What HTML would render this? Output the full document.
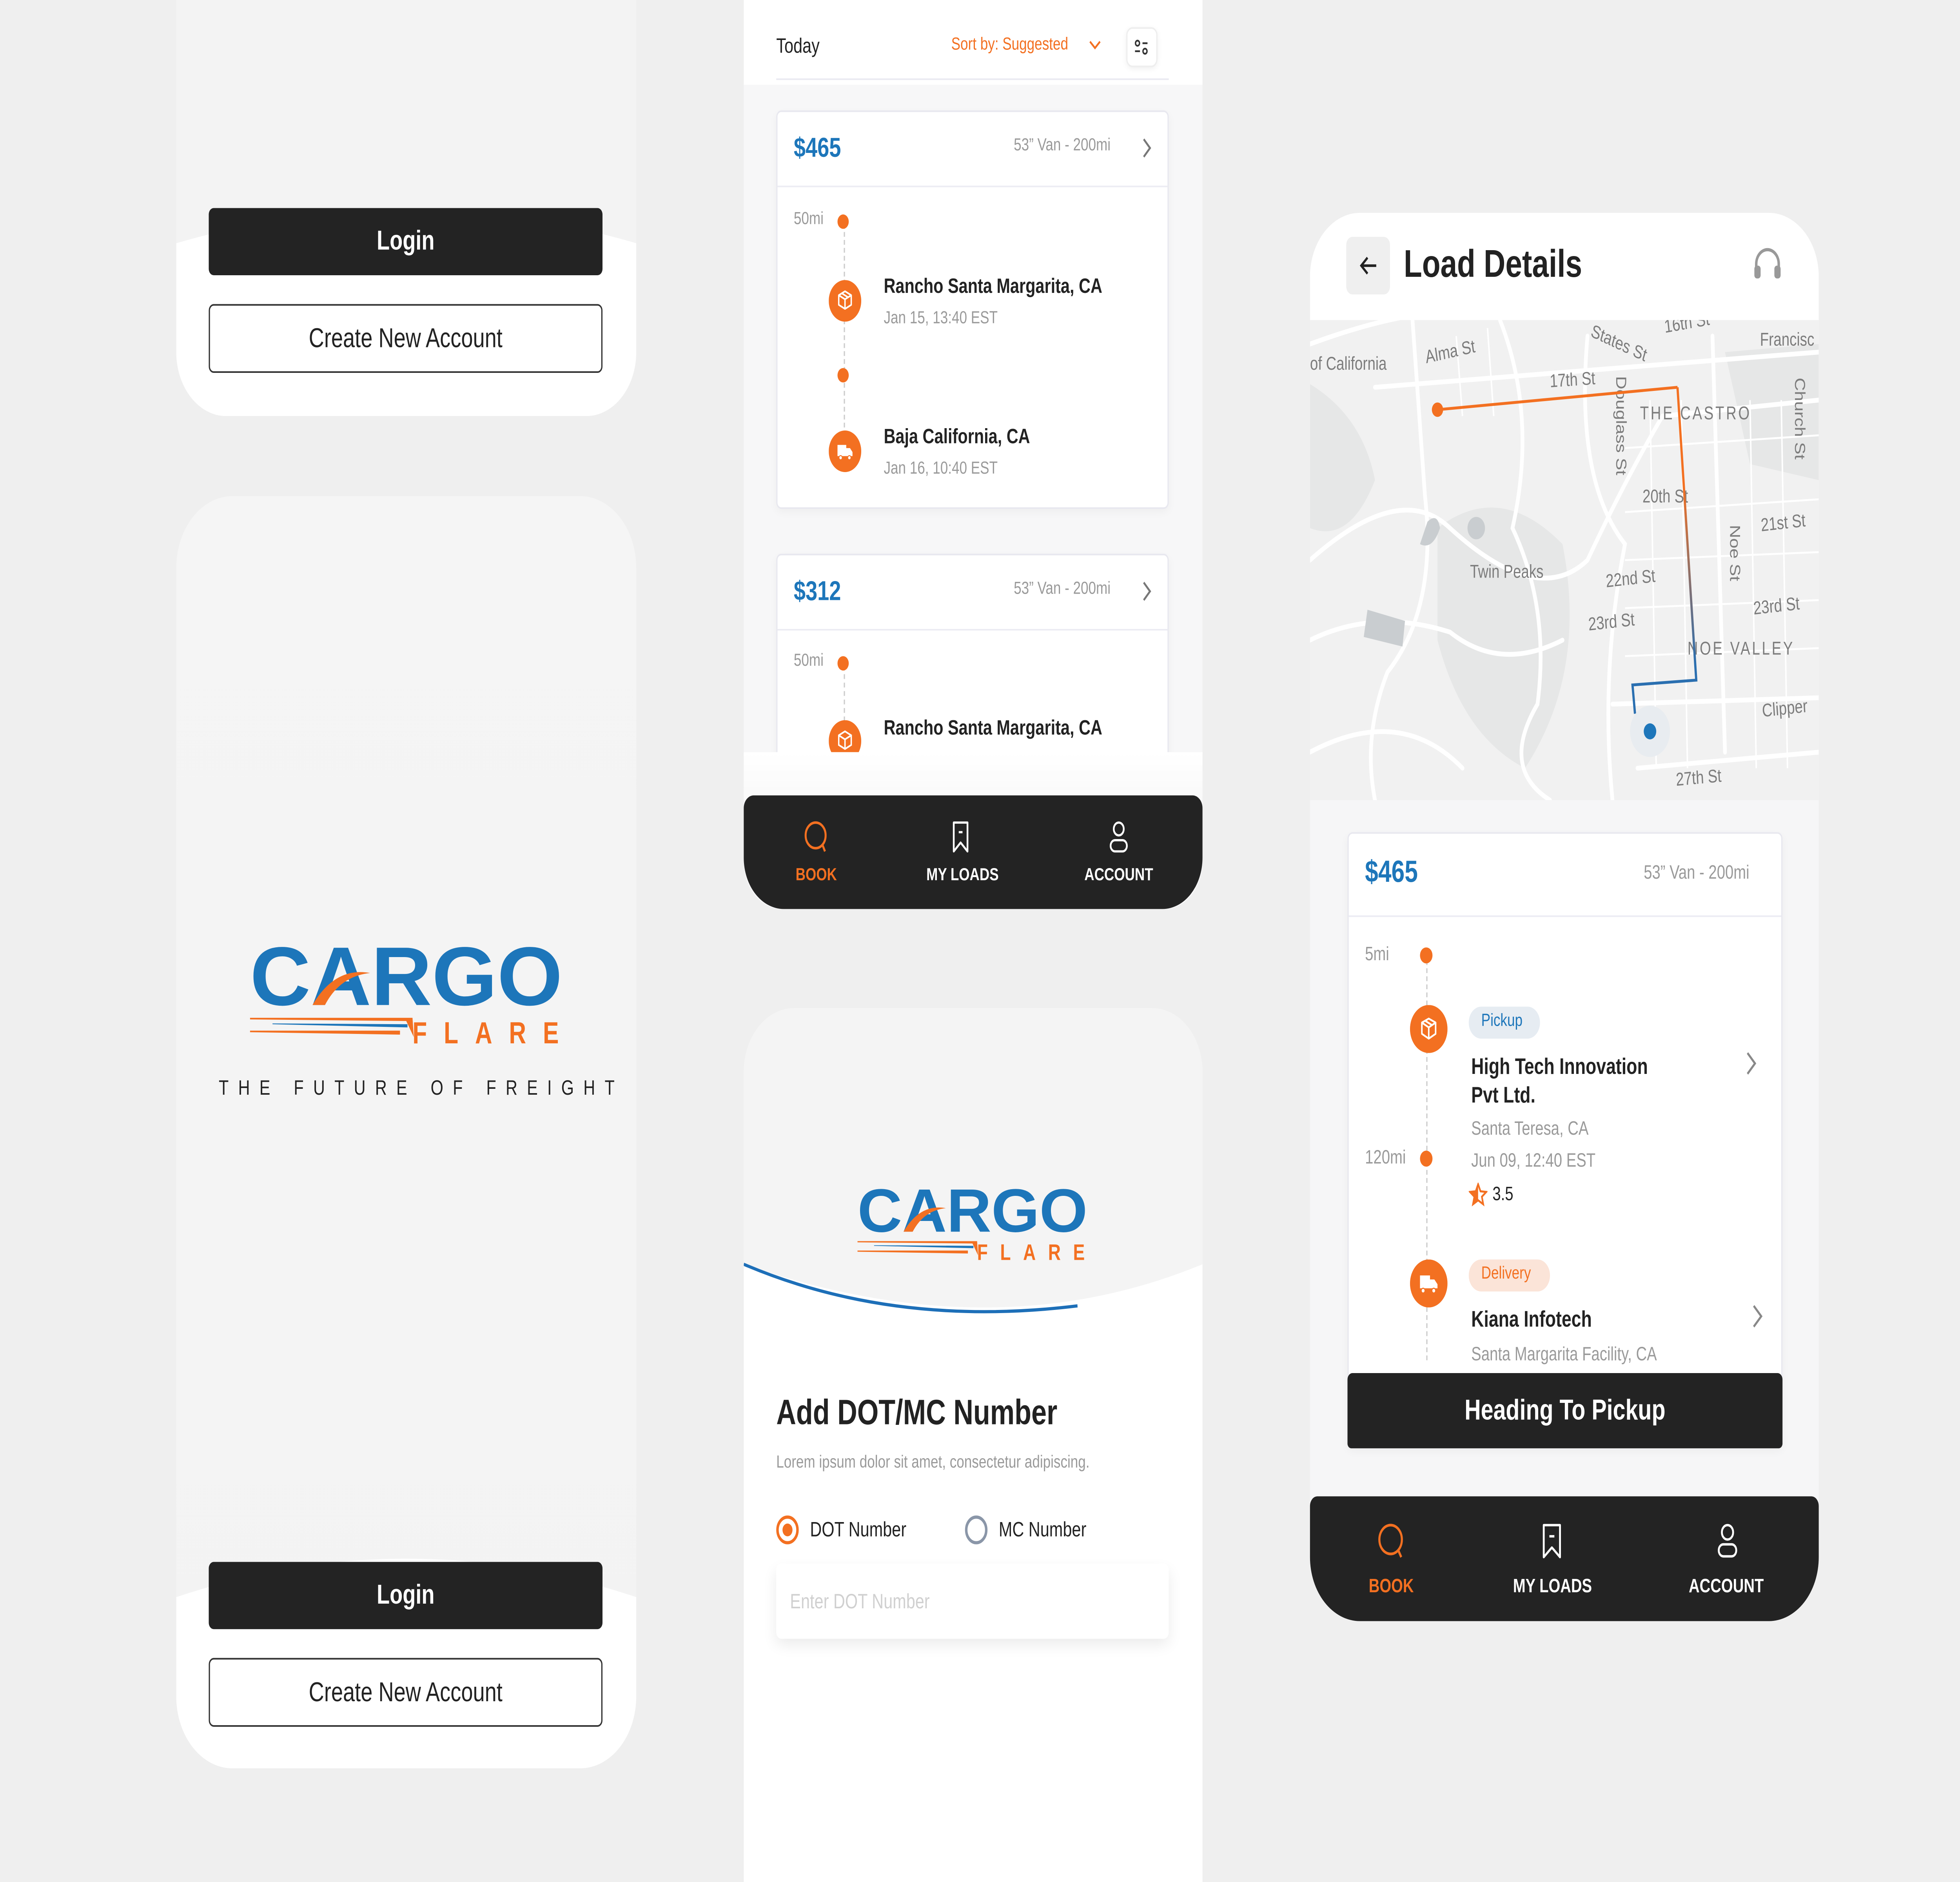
<!DOCTYPE html>
<html><head><meta charset="utf-8">
<style>
html,body{margin:0;padding:0;width:100vw;height:100vh;overflow:hidden;}
body{background:#efefef;font-family:"Liberation Sans",sans-serif;position:relative;}
#s{position:absolute;left:0;top:0;width:1568px;height:1176px;transform:scale(4.0816);transform-origin:0 0;background:#efefef;overflow:hidden;}
.a{position:absolute;}
.t{position:absolute;white-space:nowrap;line-height:1;}
.btnd{position:absolute;background:#232323;color:#fff;font-weight:bold;display:flex;align-items:center;justify-content:center;border-radius:4px;}
.btno{position:absolute;background:#fff;color:#222;border:1px solid #333;box-sizing:border-box;display:flex;align-items:center;justify-content:center;border-radius:4px;}
.card{position:absolute;background:#fff;border:1px solid #e8e8ef;box-sizing:border-box;border-radius:4px;box-shadow:0 2px 6px rgba(0,0,0,0.04);}
.g{color:#9a9a9a;}
.b{font-weight:bold;color:#222;}
.nav{position:absolute;background:#232323;}
.nl{position:absolute;font-size:11px;font-weight:bold;color:#fff;transform:translateX(-50%);white-space:nowrap;}
</style></head><body><div id="s">

<!-- Panel A -->
<div class="a" style="left:141px;top:-40px;width:368px;height:300px;border-radius:40px;overflow:hidden;background:#f3f3f3;">
 <svg class="a" style="left:0;top:0" width="368" height="300"><path d="M0,192 Q184,150 368,192 L368,300 L0,300Z" fill="#fff"/></svg>
</div>
<div class="btnd" style="left:167px;top:130px;width:315px;height:42px;font-size:17px;">Login</div>
<div class="btno" style="left:167px;top:190px;width:315px;height:43px;font-size:17px;">Create New Account</div>

<!-- Panel B -->
<div class="a" style="left:141px;top:310px;width:368px;height:795px;border-radius:45px;overflow:hidden;background:linear-gradient(180deg,#f5f5f5,#f3f3f3);">
 <svg class="a" style="left:0;top:0" width="368" height="795"><path d="M0,688 Q184,640 368,688 L368,795 L0,795Z" fill="#fff"/></svg>
</div>
<svg class="a" style="left:200px;top:588px" width="250" height="66" viewBox="0 0 250 66">
 <text x="0" y="40" font-family="Liberation Sans" font-weight="bold" font-size="52" fill="#1d76ba" textLength="250" lengthAdjust="spacingAndGlyphs">CARGO</text>
 <path d="M50,40 Q68,16 96,20 Q72,22 60,40Z" fill="#f37021"/>
 <text x="130" y="64" font-family="Liberation Sans" font-weight="bold" font-size="19" fill="#f37021" textLength="117" lengthAdjust="spacing">FLARE</text>
 <path d="M0,48 L130,48 L131,60 L125,50 L0,49Z" fill="#f37021"/>
 <path d="M18,51.5 L126,52 L126,54 L18,52Z" fill="#1d76ba"/>
 <path d="M0,56 L120,56 L120,58.5 L0,57Z" fill="#f37021"/>
</svg>
<div class="t" style="left:175px;top:673px;font-size:13px;letter-spacing:7.6px;color:#222;">THE FUTURE OF FREIGHT</div>
<div class="btnd" style="left:167px;top:976px;width:315px;height:42px;font-size:17px;">Login</div>
<div class="btno" style="left:167px;top:1036px;width:315px;height:43px;font-size:17px;">Create New Account</div>

<!-- Panel C -->
<div class="a" style="left:595px;top:-30px;width:367px;height:598px;border-radius:30px;overflow:hidden;background:#f7f7f8;">
 <div class="a" style="left:0;top:0;width:367px;height:83px;background:#fff;"></div>
</div>
<div class="t" style="left:621px;top:22px;font-size:13px;color:#222;">Today</div>
<div class="t" style="left:761px;top:23px;font-size:11px;color:#f37021;">Sort by: Suggested</div>
<svg class="a" style="left:870px;top:24px" width="12" height="10"><path d="M2,2 L6,6 L10,2" stroke="#f37021" stroke-width="1.3" fill="none"/></svg>
<div class="a" style="left:901px;top:17px;width:25px;height:25px;background:#fff;border:1px solid #eee;border-radius:5px;box-sizing:border-box;box-shadow:0 1px 4px rgba(0,0,0,.06);"></div>
<svg class="a" style="left:905px;top:21px" width="17" height="17"><circle cx="5" cy="6" r="1.6" stroke="#333" fill="none" stroke-width="1.1"/><path d="M9,6 H13 M3,11 H7" stroke="#333" stroke-width="1.1"/><circle cx="11" cy="11" r="1.6" stroke="#333" fill="none" stroke-width="1.1"/></svg>
<div class="a" style="left:621px;top:49px;width:314px;height:1px;background:#eaeaf2;"></div>

<div class="a" style="left:595px;top:50px;width:367px;height:420px;overflow:hidden;">
 <div class="card" style="left:26px;top:19px;width:314px;height:249px;"></div>
 <div class="card" style="left:26px;top:296px;width:314px;height:200px;"></div>
</div>
<!-- card1 -->
<div class="t" style="left:635px;top:84px;font-size:17px;font-weight:bold;color:#1d76ba;">$465</div>
<div class="t g" style="left:811px;top:86px;font-size:11px;">53” Van - 200mi</div>
<svg class="a" style="left:912px;top:85px" width="10" height="15"><path d="M3,2 L8,7.5 L3,13" stroke="#777" stroke-width="1.4" fill="none"/></svg>
<div class="a" style="left:622px;top:116px;width:312px;height:1px;background:#ececf3;"></div>
<div class="t g" style="left:635px;top:132px;font-size:11px;">50mi</div>
<div class="a" style="left:675px;top:140px;height:142px;border-left:1px dashed #ccc;"></div>
<div class="a" style="left:670px;top:134px;width:9px;height:9px;border-radius:50%;background:#f37021;"></div>
<div class="a" style="left:670px;top:230px;width:9px;height:9px;border-radius:50%;background:#f37021;"></div>
<svg class="a" style="left:663px;top:175px" width="26" height="26"><circle cx="13" cy="13" r="13" fill="#f37021"/><path d="M13,7 L18,9.5 V15.5 L13,18 L8,15.5 V9.5Z M8,9.5 L13,12 L18,9.5 M13,12 V18 M10.5,8.3 L15.5,10.8" stroke="#fff" stroke-width="1.1" fill="none" stroke-linejoin="round"/></svg>
<div class="t b" style="left:707px;top:172px;font-size:13px;">Rancho Santa Margarita, CA</div>
<div class="t g" style="left:707px;top:194px;font-size:11px;">Jan 15, 13:40 EST</div>
<svg class="a" style="left:663px;top:269px" width="26" height="26"><circle cx="13" cy="13" r="13" fill="#f37021"/><path d="M7,9 H14 V16 H7Z M14,11 H17 L19,13.5 V16 H14Z" fill="#fff"/><circle cx="9.5" cy="17" r="1.3" fill="#fff" stroke="#f37021" stroke-width=".6"/><circle cx="16.5" cy="17" r="1.3" fill="#fff" stroke="#f37021" stroke-width=".6"/></svg>
<div class="t b" style="left:707px;top:266px;font-size:13px;">Baja California, CA</div>
<div class="t g" style="left:707px;top:288px;font-size:11px;">Jan 16, 10:40 EST</div>
<!-- card2 -->
<div class="t" style="left:635px;top:361px;font-size:17px;font-weight:bold;color:#1d76ba;">$312</div>
<div class="t g" style="left:811px;top:363px;font-size:11px;">53” Van - 200mi</div>
<svg class="a" style="left:912px;top:362px" width="10" height="15"><path d="M3,2 L8,7.5 L3,13" stroke="#777" stroke-width="1.4" fill="none"/></svg>
<div class="a" style="left:622px;top:393px;width:312px;height:1px;background:#ececf3;"></div>
<div class="t g" style="left:635px;top:408px;font-size:11px;">50mi</div>
<div class="a" style="left:675px;top:416px;height:40px;border-left:1px dashed #ccc;"></div>
<div class="a" style="left:670px;top:410px;width:9px;height:9px;border-radius:50%;background:#f37021;"></div>
<div class="t b" style="left:707px;top:448px;font-size:13px;">Rancho Santa Margarita, CA</div>
<div class="a" style="left:595px;top:450px;width:367px;height:20px;overflow:hidden;">
<svg class="a" style="left:68px;top:0px" width="26" height="26"><circle cx="13" cy="13" r="13" fill="#f37021"/><path d="M13,7 L18,9.5 V15.5 L13,18 L8,15.5 V9.5Z M8,9.5 L13,12 L18,9.5 M13,12 V18" stroke="#fff" stroke-width="1.1" fill="none"/></svg>
</div>
<div class="a" style="left:595px;top:470px;width:367px;height:30px;background:linear-gradient(#fff,#f9f9f9);"></div>
<div class="nav" style="left:595px;top:497px;width:367px;height:71px;border-radius:8px 8px 32px 32px;"></div>
<svg class="a" style="left:641px;top:511px" width="24" height="24"><circle cx="11.5" cy="11" r="8" stroke="#f37021" stroke-width="1.6" fill="none"/><path d="M17,17 L19,21" stroke="#f37021" stroke-width="1.6"/></svg>
<svg class="a" style="left:759px;top:511px" width="20" height="24"><path d="M4,3 H15 V21 L9.5,15.5 L4,21Z" stroke="#fff" stroke-width="1.4" fill="none" stroke-linejoin="round"/><path d="M8,9 H11" stroke="#fff" stroke-width="1.4"/></svg>
<svg class="a" style="left:884px;top:511px" width="22" height="24"><circle cx="11" cy="7" r="4" stroke="#fff" stroke-width="1.4" fill="none"/><rect x="4.5" y="14" width="13" height="7" rx="3.5" stroke="#fff" stroke-width="1.4" fill="none"/></svg>
<div class="nl" style="left:653px;top:541px;color:#f37021;">BOOK</div>
<div class="nl" style="left:770px;top:541px;">MY LOADS</div>
<div class="nl" style="left:895px;top:541px;">ACCOUNT</div>

<!-- Panel D -->
<div class="a" style="left:595px;top:630px;width:367px;height:546px;border-radius:40px 40px 0 0;overflow:hidden;background:#fff;">
 <svg class="a" style="left:0;top:0" width="367" height="546"><path d="M0,0 H367 V160 Q200,214 0,160Z" fill="#f4f4f4"/><path d="M0,160 Q120,200 267,186" stroke="#1d6fb8" stroke-width="2" fill="none"/></svg>
</div>
<svg class="a" style="left:686px;top:740px" width="184" height="49" viewBox="0 0 250 66">
 <text x="0" y="40" font-family="Liberation Sans" font-weight="bold" font-size="52" fill="#1d76ba" textLength="250" lengthAdjust="spacingAndGlyphs">CARGO</text>
 <path d="M50,40 Q68,16 96,20 Q72,22 60,40Z" fill="#f37021"/>
 <text x="130" y="64" font-family="Liberation Sans" font-weight="bold" font-size="19" fill="#f37021" textLength="117" lengthAdjust="spacing">FLARE</text>
 <path d="M0,48 L130,48 L131,60 L125,50 L0,49Z" fill="#f37021"/>
 <path d="M18,51.5 L126,52 L126,54 L18,52Z" fill="#1d76ba"/>
 <path d="M0,56 L120,56 L120,58.5 L0,57Z" fill="#f37021"/>
</svg>
<div class="t b" style="left:621px;top:872px;font-size:22px;">Add DOT/MC Number</div>
<div class="t g" style="left:621px;top:909px;font-size:11px;">Lorem ipsum dolor sit amet, consectetur adipiscing.</div>
<div class="a" style="left:621px;top:947px;width:18px;height:18px;border:2px solid #f37021;border-radius:50%;box-sizing:border-box;"></div>
<div class="a" style="left:626px;top:952px;width:8px;height:8px;background:#f37021;border-radius:50%;"></div>
<div class="t" style="left:648px;top:949px;font-size:13px;color:#222;">DOT Number</div>
<div class="a" style="left:772px;top:947px;width:18px;height:18px;border:2px solid #8a96a8;border-radius:50%;box-sizing:border-box;"></div>
<div class="t" style="left:799px;top:949px;font-size:13px;color:#222;">MC Number</div>
<div class="a" style="left:621px;top:977px;width:314px;height:47px;background:#fff;border-radius:4px;box-shadow:0 4px 10px rgba(0,0,0,.08);"></div>
<div class="t" style="left:632px;top:994px;font-size:13px;color:#d0d0d0;">Enter DOT Number</div>

<!-- Panel E -->
<div class="a" style="left:1048px;top:133px;width:407px;height:880px;border-radius:40px;overflow:hidden;background:#f6f6f7;">
 <div class="a" style="left:0;top:0;width:407px;height:67px;background:#fff;"></div>
 <svg class="a" style="left:0;top:67px" width="407" height="300" viewBox="1048 200 407 300">
  <rect x="1048" y="200" width="407" height="300" fill="#f1f1f1"/>
  <g fill="#e6e7e7"><path d="M1048,240 Q1090,260 1100,300 Q1080,340 1048,330Z"/><path d="M1150,330 Q1200,300 1250,340 Q1270,420 1220,480 Q1170,460 1150,400Z"/><path d="M1380,220 L1455,215 L1455,300 L1400,290Z"/></g>
  <g stroke="#fff" stroke-width="3" fill="none" stroke-linecap="round">
   <path d="M1048,215 Q1100,200 1140,196"/>
   <path d="M1100,242 L1455,220"/>
   <path d="M1048,350 Q1120,300 1160,330 Q1230,380 1270,350 Q1300,300 1330,260 L1455,250"/>
   <path d="M1130,200 L1140,310 Q1150,380 1110,420 Q1090,460 1100,500"/>
   <path d="M1200,200 Q1230,260 1210,330 Q1240,380 1230,440 Q1200,480 1240,500"/>
   <path d="M1270,210 Q1260,300 1300,340 Q1280,420 1290,500"/>
   <path d="M1048,400 Q1100,380 1160,395 Q1200,420 1250,400"/>
   <path d="M1310,480 L1455,470"/>
   <path d="M1290,440 L1455,436"/>
   <path d="M1370,210 L1380,470"/>
   <path d="M1048,470 Q1120,440 1170,480"/>
  </g>
  <g stroke="#fff" stroke-width="1.2" fill="none">
   <path d="M1300,280 L1455,272 M1300,320 L1455,312 M1300,350 L1455,345 M1300,380 L1455,375 M1300,410 L1455,405"/>
   <path d="M1320,250 L1325,480 M1345,250 L1350,480 M1400,250 L1405,480 M1425,250 L1430,480"/>
   <path d="M1165,210 L1170,260 M1190,205 L1195,260"/>
  </g>
  <path d="M1142,326 Q1150,320 1152,330 Q1146,344 1136,340Z" fill="#c9cdd0"/>
  <circle cx="1181" cy="330" r="7" fill="#c9cdd0"/>
  <path d="M1094,381 L1124,388 L1122,404 L1091,398Z" fill="#c9cdd0"/>
  <g font-family="Liberation Sans" font-size="11.5" fill="#7c7c7c">
   <text x="1048" y="231">of California</text>
   <text x="1141" y="227" transform="rotate(-10 1141 227)">Alma St</text>
   <text x="1240" y="242" transform="rotate(-3 1240 242)">17th St</text>
   <text x="1272" y="210" transform="rotate(20 1272 210)">States St</text>
   <text x="1332" y="208" transform="rotate(-8 1332 208)">16th St</text>
   <text x="1408" y="216">Francisc</text>
   <text x="1293" y="235" transform="rotate(90 1293 235)">Douglass St</text>
   <text x="1312" y="262" letter-spacing="1.5">THE CASTRO</text>
   <text x="1436" y="236" transform="rotate(90 1436 236)">Church St</text>
   <text x="1314" y="314">20th St</text>
   <text x="1409" y="332" transform="rotate(-5 1409 332)">21st St</text>
   <text x="1384" y="328" transform="rotate(90 1384 328)">Noe St</text>
   <text x="1176" y="361">Twin Peaks</text>
   <text x="1285" y="367" transform="rotate(-5 1285 367)">22nd St</text>
   <text x="1271" y="394" transform="rotate(-5 1271 394)">23rd St</text>
   <text x="1403" y="384" transform="rotate(-5 1403 384)">23rd St</text>
   <text x="1350" y="409" letter-spacing="1.5">NOE VALLEY</text>
   <text x="1410" y="448" transform="rotate(-5 1410 448)">Clipper</text>
   <text x="1341" y="491" transform="rotate(-4 1341 491)">27th St</text>
  </g>
  <defs><linearGradient id="rg" x1="0" y1="0" x2="0" y2="1" gradientUnits="objectBoundingBox"><stop offset="0.3" stop-color="#f37021"/><stop offset="0.85" stop-color="#2a6fb0"/></linearGradient></defs>
  <path d="M1150,256 L1342,242" stroke="#f37021" stroke-width="1.8" fill="none"/>
  <path d="M1342,242 L1357,425 L1306,428 L1308,446" stroke="url(#rg)" stroke-width="1.8" fill="none"/>
  <circle cx="1150" cy="256" r="4.5" fill="#f37021"/>
  <circle cx="1320" cy="457" r="16" fill="#e8ecf0"/>
  <circle cx="1320" cy="457" r="5" fill="#1d76ba"/>
 </svg>
</div>
<div class="a" style="left:1077px;top:148px;width:35px;height:36px;background:#efefef;border-radius:5px;"></div>
<svg class="a" style="left:1086px;top:158px" width="18" height="16"><path d="M15,8 H3 M8,3 L3,8 L8,13" stroke="#222" stroke-width="1.6" fill="none"/></svg>
<div class="t b" style="left:1123px;top:154px;font-size:24px;">Load Details</div>
<svg class="a" style="left:1401px;top:153px" width="26" height="26"><path d="M4,16 V12 A9,9 0 0 1 22,12 V16" stroke="#999" stroke-width="2" fill="none"/><rect x="2.5" y="13" width="5" height="8" rx="2" fill="#999"/><rect x="18.5" y="13" width="5" height="8" rx="2" fill="#999"/></svg>

<div class="card" style="left:1078px;top:520px;width:348px;height:385px;"></div>
<div class="t" style="left:1092px;top:536px;font-size:19px;font-weight:bold;color:#1d76ba;">$465</div>
<div class="t g" style="left:1315px;top:539px;font-size:12px;">53” Van - 200mi</div>
<div class="a" style="left:1079px;top:572px;width:346px;height:1px;background:#ececf3;"></div>
<div class="t g" style="left:1092px;top:590px;font-size:12px;">5mi</div>
<div class="a" style="left:1141px;top:600px;height:250px;border-left:1px dashed #ccc;"></div>
<div class="a" style="left:1136px;top:592px;width:10px;height:10px;border-radius:50%;background:#f37021;"></div>
<svg class="a" style="left:1128px;top:628px" width="30" height="30"><circle cx="15" cy="15" r="15" fill="#f37021"/><path d="M15,8.5 L20.5,11 V18 L15,21 L9.5,18 V11Z M9.5,11 L15,14 L20.5,11 M15,14 V21 M12,9.8 L17.5,12.5" stroke="#fff" stroke-width="1.2" fill="none" stroke-linejoin="round"/></svg>
<div class="a" style="left:1175px;top:629px;width:57px;height:20px;border-radius:10px;background:#e6ecf2;"></div>
<div class="t" style="left:1185px;top:633px;font-size:11px;color:#1d76ba;">Pickup</div>
<div class="t b" style="left:1177px;top:659px;font-size:14px;">High Tech Innovation</div>
<div class="t b" style="left:1177px;top:677px;font-size:14px;">Pvt Ltd.</div>
<svg class="a" style="left:1395px;top:656px" width="12" height="17"><path d="M3,2 L9,8.5 L3,15" stroke="#888" stroke-width="1.5" fill="none"/></svg>
<div class="t g" style="left:1177px;top:699px;font-size:12px;">Santa Teresa, CA</div>
<div class="t g" style="left:1092px;top:717px;font-size:12px;">120mi</div>
<div class="a" style="left:1136px;top:719px;width:10px;height:10px;border-radius:50%;background:#f37021;"></div>
<div class="t g" style="left:1177px;top:719px;font-size:12px;">Jun 09, 12:40 EST</div>
<svg class="a" style="left:1175px;top:739px" width="15" height="15"><path d="M7.5,1 L9.4,5.4 L14,5.8 L10.5,8.8 L11.6,13.5 L7.5,11 L3.4,13.5 L4.5,8.8 L1,5.8 L5.6,5.4Z" stroke="#f37021" stroke-width="1.3" fill="none"/><path d="M7.5,1 L5.6,5.4 L1,5.8 L4.5,8.8 L3.4,13.5 L7.5,11Z" fill="#f37021"/></svg>
<div class="t" style="left:1194px;top:740px;font-size:12px;color:#222;">3.5</div>
<svg class="a" style="left:1128px;top:787px" width="30" height="30"><circle cx="15" cy="15" r="15" fill="#f37021"/><path d="M8,10 H16 V18 H8Z M16,12.5 H19.5 L22,15.5 V18 H16Z" fill="#fff"/><circle cx="10.5" cy="19.5" r="1.5" fill="#fff" stroke="#f37021" stroke-width=".7"/><circle cx="19" cy="19.5" r="1.5" fill="#fff" stroke="#f37021" stroke-width=".7"/></svg>
<div class="a" style="left:1175px;top:787px;width:65px;height:20px;border-radius:10px;background:#fbe4d8;"></div>
<div class="t" style="left:1185px;top:791px;font-size:11px;color:#f37021;">Delivery</div>
<div class="t b" style="left:1177px;top:817px;font-size:14px;">Kiana Infotech</div>
<svg class="a" style="left:1400px;top:814px" width="12" height="17"><path d="M3,2 L9,8.5 L3,15" stroke="#888" stroke-width="1.5" fill="none"/></svg>
<div class="t g" style="left:1177px;top:840px;font-size:12px;">Santa Margarita Facility, CA</div>
<div class="btnd" style="left:1078px;top:858px;width:348px;height:47px;font-size:18px;border-radius:4px 4px 3px 3px;">Heading To Pickup</div>

<div class="nav" style="left:1048px;top:935px;width:407px;height:78px;border-radius:6px 6px 40px 40px;"></div>
<svg class="a" style="left:1100px;top:950px" width="26" height="26"><circle cx="12.5" cy="12" r="9" stroke="#f37021" stroke-width="1.7" fill="none"/><path d="M18.5,18.5 L21,23" stroke="#f37021" stroke-width="1.7"/></svg>
<svg class="a" style="left:1231px;top:950px" width="22" height="26"><path d="M4,3 H17 V23 L10.5,17 L4,23Z" stroke="#fff" stroke-width="1.5" fill="none" stroke-linejoin="round"/><path d="M8.5,10 H12.5" stroke="#fff" stroke-width="1.5"/></svg>
<svg class="a" style="left:1370px;top:950px" width="24" height="26"><circle cx="12" cy="7.5" r="4.5" stroke="#fff" stroke-width="1.5" fill="none"/><rect x="5" y="15" width="14" height="7.5" rx="3.7" stroke="#fff" stroke-width="1.5" fill="none"/></svg>
<div class="nl" style="left:1113px;top:984px;font-size:12px;color:#f37021;">BOOK</div>
<div class="nl" style="left:1242px;top:984px;font-size:12px;">MY LOADS</div>
<div class="nl" style="left:1381px;top:984px;font-size:12px;">ACCOUNT</div>

</div>
<script>
(function(){
 function fit(){
  var w=document.documentElement.clientWidth||window.innerWidth;
  var h=document.documentElement.clientHeight||window.innerHeight;
  var kx=w/1568, ky=h/1176;
  if(!kx||!isFinite(kx))kx=4.0816;
  if(!ky||!isFinite(ky))ky=4.0816;
  document.getElementById('s').style.transform='scale('+(kx-0.00001)+','+(ky-0.00001)+')';
 }
 fit();window.addEventListener('resize',fit);
})();
</script>
</body></html>
